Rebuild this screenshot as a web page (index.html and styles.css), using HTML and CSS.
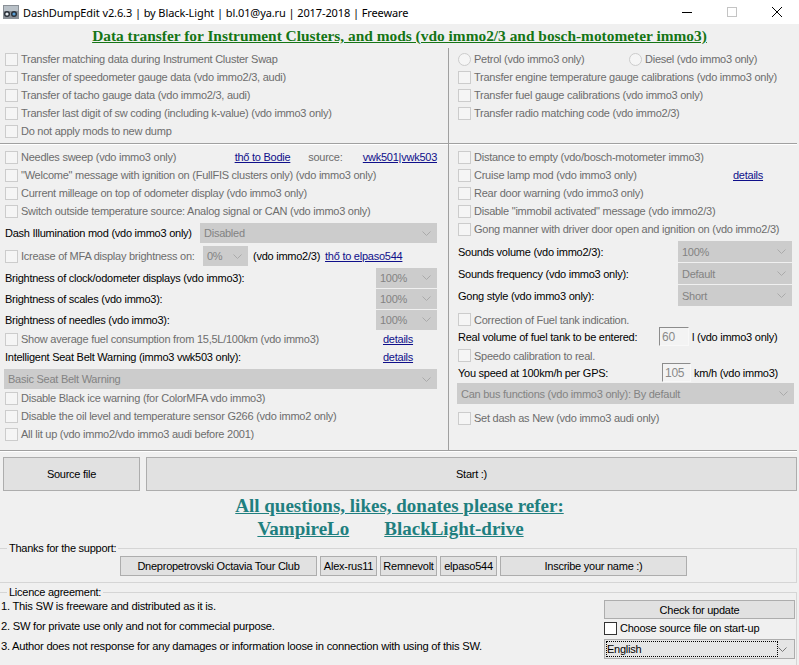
FILE: index.html
```html
<!DOCTYPE html>
<html>
  <head>
    <meta charset="utf-8">
    <link rel="stylesheet" href="styles.css">
  </head>
  <body>
    <div class="window">
      <div class="titlebar">
        <svg class="app-icon" width="16" height="16" viewBox="0 0 16 16">
          <rect x="0" y="1" width="16" height="14" fill="#8a9097"/>
          <rect x="1" y="2" width="14" height="5" fill="#b9c1c8"/>
          <circle cx="4" cy="10" r="3" fill="#2a3038"/>
          <circle cx="4" cy="10" r="1.6" fill="#e8eef3"/>
          <circle cx="11" cy="10" r="3" fill="#2a3038"/>
          <circle cx="11" cy="10" r="1.6" fill="#5aa0d8"/>
        </svg>
        <span class="title">DashDumpEdit v2.6.3 | by Black-Light | bl.01@ya.ru | 2017-2018 | Freeware</span>
        <div class="win-btns">
          <span><svg width="10" height="10"><line x1="0" y1="5.5" x2="10" y2="5.5" stroke="#000"/></svg></span>
          <span><svg width="10" height="10"><rect x="0.5" y="0.5" width="9" height="9" fill="none" stroke="#c4c4c4"/></svg></span>
          <span><svg width="10" height="10"><path d="M0 0L10 10M10 0L0 10" stroke="#000" stroke-width="1"/></svg></span>
        </div>
      </div>

      <h1 class="heading"><a>Data transfer for Instrument Clusters, and mods (vdo immo2/3 and bosch-motometer immo3)</a></h1>

      <!-- transfer options -->
      <section class="panel panel-top">
        <div class="col col-left">
          <div class="row"><span class="cb"></span><span class="off">Transfer matching data during Instrument Cluster Swap</span></div>
          <div class="row"><span class="cb"></span><span class="off">Transfer of speedometer gauge data (vdo immo2/3, audi)</span></div>
          <div class="row"><span class="cb"></span><span class="off">Transfer of tacho gauge data (vdo immo2/3, audi)</span></div>
          <div class="row"><span class="cb"></span><span class="off">Transfer last digit of sw coding (including k-value) (vdo immo3 only)</span></div>
          <div class="row"><span class="cb"></span><span class="off">Do not apply mods to new dump</span></div>
        </div>
        <div class="col col-right">
          <div class="row">
            <span class="radio"></span><span class="off petrol">Petrol (vdo immo3 only)</span>
            <span class="radio"></span><span class="off">Diesel (vdo immo3 only)</span>
          </div>
          <div class="row"><span class="cb"></span><span class="off">Transfer engine temperature gauge calibrations (vdo immo3 only)</span></div>
          <div class="row"><span class="cb"></span><span class="off">Transfer fuel gauge calibrations (vdo immo3 only)</span></div>
          <div class="row"><span class="cb"></span><span class="off">Transfer radio matching code (vdo immo2/3)</span></div>
        </div>
      </section>

      <!-- mods -->
      <section class="panel panel-mid">
        <div class="col col-left">
          <div class="row">
            <span class="cb"></span><span class="off needles">Needles sweep (vdo immo3 only)</span>
            <a class="link thanks-link">thő to Bodie</a>
            <span class="off source">source:</span>
            <a class="link">vwk501|vwk503</a>
          </div>
          <div class="row"><span class="cb"></span><span class="off">"Welcome" message with ignition on (FullFIS clusters only) (vdo immo3 only)</span></div>
          <div class="row"><span class="cb"></span><span class="off">Current milleage on top of odometer display (vdo immo3 only)</span></div>
          <div class="row"><span class="cb"></span><span class="off">Switch outside temperature source: Analog signal or CAN (vdo immo3 only)</span></div>
          <div class="row row-combo gap3">
            <span>Dash Illumination mod (vdo immo3 only)</span>
            <div class="combo combo-wide"><span>Disabled</span><svg class="chev" width="9" height="5"><path d="M0.5 0.5L4.5 4.5L8.5 0.5" fill="none" stroke="#aaa"/></svg></div>
          </div>
          <div class="row row-combo gap3">
            <span class="cb"></span><span class="off mfa">Icrease of MFA display brightness on:</span>
            <div class="combo combo-pct"><span>0%</span><svg class="chev" width="9" height="5"><path d="M0.5 0.5L4.5 4.5L8.5 0.5" fill="none" stroke="#aaa"/></svg></div>
            <span class="after-combo">(vdo immo2/3)</span>
            <a class="link after-combo">thő to elpaso544</a>
          </div>
          <div class="row row-bright gap1">
            <span>Brightness of clock/odometer displays (vdo immo3):</span>
            <div class="combo combo-small"><span>100%</span><svg class="chev" width="9" height="5"><path d="M0.5 0.5L4.5 4.5L8.5 0.5" fill="none" stroke="#aaa"/></svg></div>
          </div>
          <div class="row row-bright">
            <span>Brightness of scales (vdo immo3):</span>
            <div class="combo combo-small"><span>100%</span><svg class="chev" width="9" height="5"><path d="M0.5 0.5L4.5 4.5L8.5 0.5" fill="none" stroke="#aaa"/></svg></div>
          </div>
          <div class="row row-bright">
            <span>Brightness of needles (vdo immo3):</span>
            <div class="combo combo-small"><span>100%</span><svg class="chev" width="9" height="5"><path d="M0.5 0.5L4.5 4.5L8.5 0.5" fill="none" stroke="#aaa"/></svg></div>
          </div>
          <div class="row"><span class="cb"></span><span class="off">Show average fuel consumption from 15,5L/100km (vdo immo3)</span><a class="link details">details</a></div>
          <div class="row"><span>Intelligent Seat Belt Warning (immo3 vwk503 only):</span><a class="link details">details</a></div>
          <div class="row row-combo gap3">
            <div class="combo combo-belt"><span>Basic Seat Belt Warning</span><svg class="chev" width="9" height="5"><path d="M0.5 0.5L4.5 4.5L8.5 0.5" fill="none" stroke="#aaa"/></svg></div>
          </div>
          <div class="row"><span class="cb"></span><span class="off">Disable Black ice warning (for ColorMFA vdo immo3)</span></div>
          <div class="row"><span class="cb"></span><span class="off">Disable the oil level and temperature sensor G266 (vdo immo2 only)</span></div>
          <div class="row"><span class="cb"></span><span class="off">All lit up (vdo immo2/vdo immo3 audi before 2001)</span></div>
        </div>

        <div class="col col-right">
          <div class="row"><span class="cb"></span><span class="off">Distance to empty (vdo/bosch-motometer immo3)</span></div>
          <div class="row"><span class="cb"></span><span class="off cruise">Cruise lamp mod (vdo immo3 only)</span><a class="link">details</a></div>
          <div class="row"><span class="cb"></span><span class="off">Rear door warning (vdo immo3 only)</span></div>
          <div class="row"><span class="cb"></span><span class="off">Disable "immobil activated" message (vdo immo2/3)</span></div>
          <div class="row"><span class="cb"></span><span class="off">Gong manner with driver door open and ignition on (vdo immo2/3)</span></div>
          <div class="row row-sound gap3">
            <span>Sounds volume (vdo immo2/3):</span>
            <div class="combo combo-sound"><span>100%</span><svg class="chev" width="9" height="5"><path d="M0.5 0.5L4.5 4.5L8.5 0.5" fill="none" stroke="#aaa"/></svg></div>
          </div>
          <div class="row row-sound gap1">
            <span>Sounds frequency (vdo immo3 only):</span>
            <div class="combo combo-sound"><span>Default</span><svg class="chev" width="9" height="5"><path d="M0.5 0.5L4.5 4.5L8.5 0.5" fill="none" stroke="#aaa"/></svg></div>
          </div>
          <div class="row row-sound gap1">
            <span>Gong style (vdo immo3 only):</span>
            <div class="combo combo-sound"><span>Short</span><svg class="chev" width="9" height="5"><path d="M0.5 0.5L4.5 4.5L8.5 0.5" fill="none" stroke="#aaa"/></svg></div>
          </div>
          <div class="row row-tight gap5"><span class="cb"></span><span class="off">Correction of Fuel tank indication.</span></div>
          <div class="row row-tight">
            <span class="field-label tank">Real volume of fuel tank to be entered:</span>
            <span class="field field-tank">60</span>
            <span class="unit">l (vdo immo3 only)</span>
          </div>
          <div class="row row-tight gap2"><span class="cb"></span><span class="off">Speedo calibration to real.</span></div>
          <div class="row row-tight">
            <span class="field-label gps">You speed at 100km/h per GPS:</span>
            <span class="field field-gps">105</span>
            <span class="unit">km/h (vdo immo3)</span>
          </div>
          <div class="row row-canbus gap2">
            <div class="combo combo-canbus"><span>Can bus functions (vdo immo3 only): By default</span><svg class="chev" width="9" height="5"><path d="M0.5 0.5L4.5 4.5L8.5 0.5" fill="none" stroke="#aaa"/></svg></div>
          </div>
          <div class="row gap5"><span class="cb"></span><span class="off">Set dash as New (vdo immo3 audi only)</span></div>
        </div>
      </section>

      <div class="actions">
        <button class="btn btn-source">Source file</button>
        <button class="btn btn-start">Start :)</button>
      </div>

      <div class="contacts">
        <div class="contact-line"><a>All questions, likes, donates please refer:</a></div>
        <div class="contact-line contact-names"><a>VampireLo</a><a>BlackLight-drive</a></div>
      </div>

      <fieldset class="group group-thanks">
        <legend>Thanks for the support:</legend>
        <div class="supporters">
          <button class="btn btn-small w-club">Dnepropetrovski Octavia Tour Club</button>
          <button class="btn btn-small w-name">Alex-rus11</button>
          <button class="btn btn-small w-name">Remnevolt</button>
          <button class="btn btn-small w-name">elpaso544</button>
          <button class="btn btn-small w-inscribe">Inscribe your name :)</button>
        </div>
      </fieldset>

      <fieldset class="group group-licence">
        <legend>Licence agreement:</legend>
        <div class="licence">
          <ol class="terms">
            <li>1. This SW is freeware and distributed as it is.</li>
            <li>2. SW for private use only and not for commecial purpose.</li>
            <li>3. Author does not response for any damages or information loose in connection with using of this SW.</li>
          </ol>
          <div class="side">
            <button class="btn btn-update">Check for update</button>
            <div class="startup"><span class="cb cb-on"></span><span>Choose source file on start-up</span></div>
            <div class="lang">
              <span class="lang-value">English</span>
              <svg class="chev" width="9" height="5"><path d="M0.5 0.5L4.5 4.5L8.5 0.5" fill="none" stroke="#777"/></svg>
            </div>
          </div>
        </div>
      </fieldset>
    </div>
  </body>
</html>
```

FILE: styles.css
```css
* {
  box-sizing: border-box;
}

body {
  margin: 0;
  background: #f0f0f0;
  font-family: "Liberation Sans", Arial, sans-serif;
  font-size: 11px;
  letter-spacing: -0.25px;
  color: #000;
}

.window {
  width: 799px;
  height: 665px;
  overflow: hidden;
}

/* title bar */
.titlebar {
  display: flex;
  align-items: center;
  height: 24px;
  padding-left: 3px;
  background: #fff;
  font-family: "Noto Sans", sans-serif;
  font-size: 11px;
  letter-spacing: -0.1px;
}

.app-icon {
  margin-right: 4px;
}

.title {
  flex: 1;
}

.win-btns {
  display: flex;
}

.win-btns span {
  display: flex;
  align-items: center;
  justify-content: center;
  width: 45px;
  height: 24px;
}

.heading {
  height: 24px;
  margin: 0;
  text-align: center;
  font-family: "Liberation Serif", "Times New Roman", serif;
  font-size: 15.4px;
  letter-spacing: 0;
  line-height: 24px;
  color: #157515;
}

.heading a {
  text-decoration: underline;
}

/* panels */
.panel {
  display: grid;
  grid-template-columns: 449px 1fr;
  margin-right: 2px;
  border-bottom: 1px solid #a0a0a0;
  box-shadow: 0 1px 0 #fff;
}

.panel-top {
  height: 96px;
}

.panel-mid {
  height: 307px;
}

.col-left {
  padding: 2px 11px 0 5px;
  border-right: 1px solid #a0a0a0;
}

.col-right {
  padding: 2px 4px 0 9px;
}

.panel-mid .col {
  padding-top: 4px;
}

.row {
  display: flex;
  align-items: center;
  height: 18px;
  white-space: nowrap;
}

.off {
  color: #6d6d6d;
}

.cb {
  flex: none;
  width: 13px;
  height: 13px;
  margin-right: 3px;
  border: 1px solid #cccccc;
  background: #f5f5f5;
}

.cb-on {
  border-color: #333;
  background: #fff;
}

.radio {
  flex: none;
  width: 13px;
  height: 13px;
  margin-right: 3px;
  border: 1px solid #cccccc;
  border-radius: 50%;
  background: #f5f5f5;
}

.petrol {
  width: 155px;
}

.link {
  color: #0f0f8a;
  text-decoration: underline;
}

.needles {
  width: 215px;
}

.thanks-link {
  width: 74px;
}

.source {
  width: 55px;
}

.details {
  width: 54px;
  margin-left: auto;
}

.cruise {
  width: 259px;
}

/* combo boxes */
.combo {
  display: flex;
  align-items: center;
  justify-content: space-between;
  height: 20px;
  padding: 0 6px 0 4px;
  background: #cccccc;
  color: #838383;
}

.row-combo {
  height: 20px;
}

.gap1 {
  margin-top: 1px;
}

.gap2 {
  margin-top: 2px;
}

.gap3 {
  margin-top: 3px;
}

.gap5 {
  margin-top: 5px;
}

.combo-wide {
  width: 237px;
  margin-left: auto;
}

.mfa {
  width: 182px;
}

.combo-pct {
  width: 45px;
}

.after-combo {
  margin-left: 5px;
}

.row-bright {
  height: 21px;
}

.combo-small {
  width: 61px;
  height: 20px;
  margin-left: auto;
}

.combo-belt {
  width: 433px;
  margin-left: -1px;
}

.row-sound {
  height: 21px;
}

.combo-sound {
  width: 114px;
  height: 21px;
  margin-left: auto;
  margin-right: 2px;
}

.row-tight {
  height: 17px;
}

.field-label.tank {
  width: 201px;
}

.field-label.gps {
  width: 204px;
}

.field {
  flex: none;
  height: 19px;
  padding: 1px 0 0 2px;
  border: 1px solid;
  border-color: #8c8c8c #f8f8f8 #f8f8f8 #8c8c8c;
  background: #f3f3f3;
  color: #8a8a8a;
  font-size: 12px;
  line-height: 16px;
}

.field-tank {
  width: 30px;
}

.field-gps {
  width: 29px;
}

.unit {
  margin-left: 3px;
}

.row-canbus {
  height: 21px;
}

.combo-canbus {
  width: 337px;
  height: 21px;
  margin-left: -1px;
}

/* bottom area */
.actions {
  display: flex;
  gap: 6px;
  margin: 6px 0 0 3px;
}

.btn {
  height: 34px;
  border: 1px solid #adadad;
  background: #e1e1e1;
  font-family: inherit;
  font-size: 11px;
  letter-spacing: inherit;
  color: #000;
  padding: 0;
}

.btn-source {
  width: 137px;
}

.btn-start {
  width: 651px;
}

.contacts {
  margin-top: 3px;
  font-family: "Liberation Serif", "Times New Roman", serif;
  font-size: 19px;
  font-weight: bold;
  letter-spacing: 0;
  color: #1f7f7f;
}

.contacts a {
  text-decoration: underline;
}

.contact-line {
  display: flex;
  justify-content: center;
  height: 23px;
  line-height: 23px;
}

.contact-names {
  gap: 35px;
  padding-right: 18px;
}

.group {
  margin: 2px 0 0 -2px;
  width: 799px;
  padding: 0;
  border: 1px solid #d5d5d5;
}

.group legend {
  margin-left: 8px;
  padding: 0 2px;
  line-height: 12px;
}

.group-thanks {
  height: 41px;
}

.supporters {
  display: flex;
  gap: 3px;
  margin: 2px 0 0 121px;
}

.btn-small {
  height: 20px;
}

.w-club {
  width: 197px;
}

.w-name {
  width: 57px;
}

.w-inscribe {
  width: 187px;
}

.group-licence {
  margin-top: 3px;
  height: 90px;
  border-bottom: none;
}

.licence {
  display: flex;
}

.terms {
  flex: 1;
  margin: -2px 0 0 2px;
  padding: 0;
  list-style: none;
  font-size: 11.2px;
}

.terms li {
  height: 20px;
  line-height: 20px;
}

.side {
  width: 191px;
  margin-right: 1px;
  padding-top: 2px;
}

.btn-update {
  width: 191px;
  height: 19px;
}

.startup {
  display: flex;
  align-items: center;
  gap: 3px;
  height: 14px;
  margin-top: 2px;
}

.startup .cb {
  margin-right: 0;
}

.lang {
  display: flex;
  align-items: center;
  justify-content: space-between;
  height: 20px;
  margin-top: 4px;
  padding: 0 7px 0 1px;
  border: 1px solid #acacac;
  background: #e5e5e5;
}

.lang-value {
  width: 173px;
  height: 16px;
  line-height: 14px;
  border: 1px dotted #000;
}
```
